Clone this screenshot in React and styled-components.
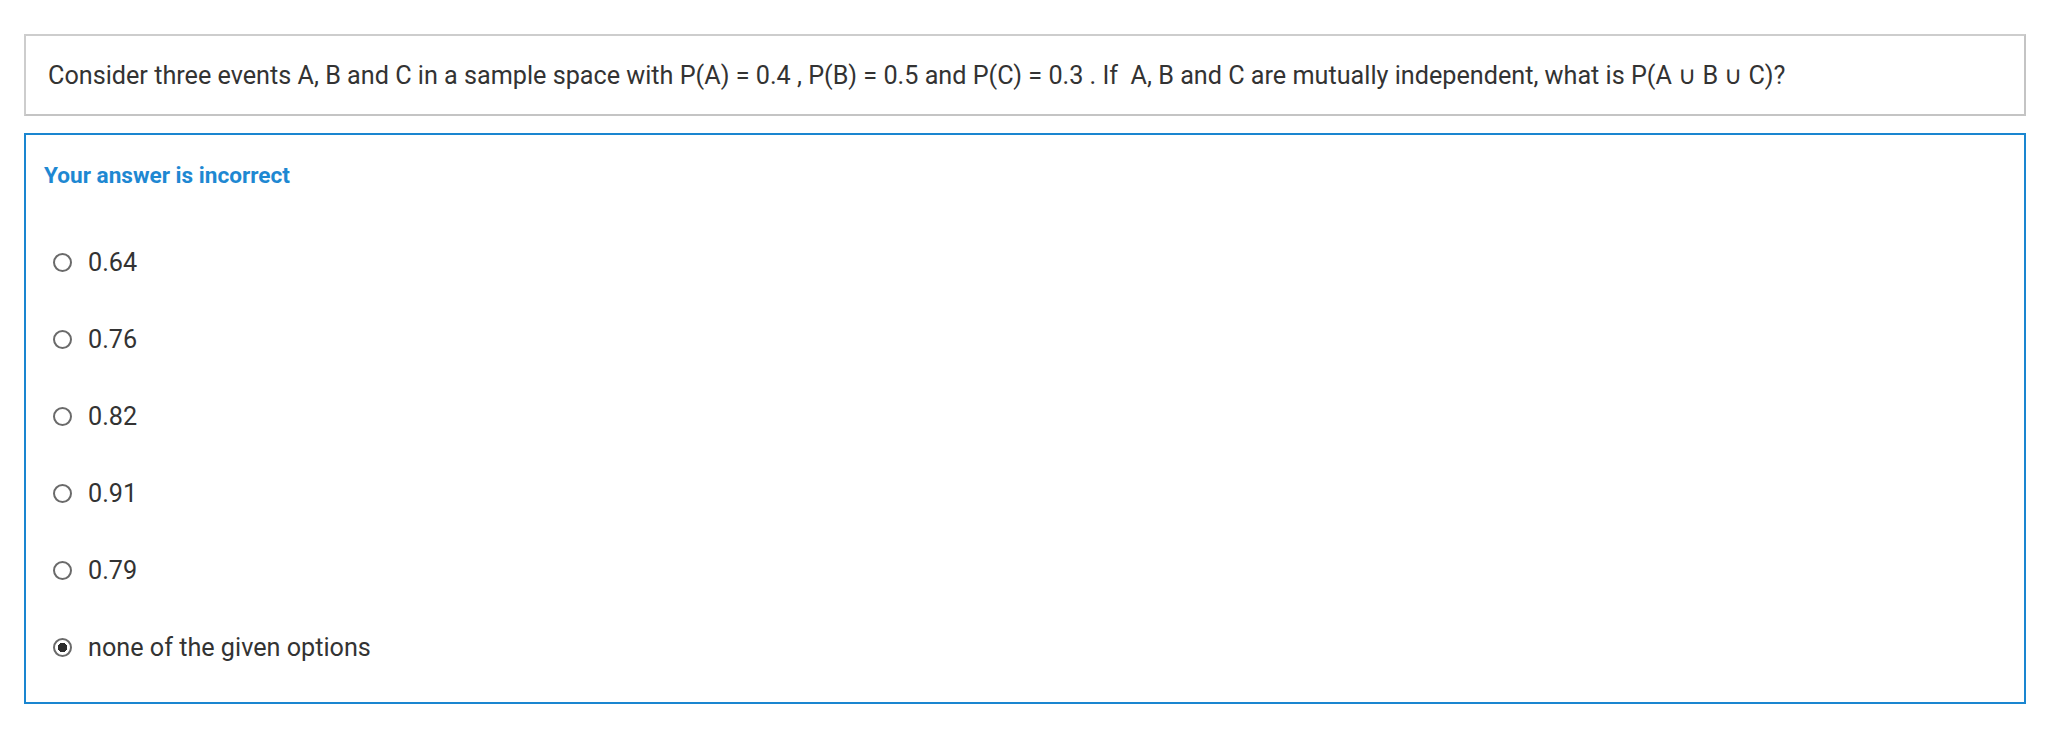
import React from 'react';
import styled, { createGlobalStyle } from 'styled-components';

const GlobalStyle = createGlobalStyle`
  body {
    margin: 0;
    background: #ffffff;
    font-family: Roboto, "Liberation Sans", Arial, sans-serif;
    color: #333333;
  }
`

const options = ['0.64', '0.76', '0.82', '0.91', '0.79', 'none of the given options'];

export default function App() {
  const selected = 5;
  return (
    <Page>
      <GlobalStyle />
      <Question>
        Consider three events A, B and C in a sample space with P(A) = 0.4 , P(B) = 0.5 and P(C) = 0.3 . If&nbsp; A, B and C are mutually independent, what is P(A ∪ B ∪ C)?
      </Question>
      <Answer>
        <Feedback>Your answer is incorrect</Feedback>
        <OptionList>
          {options.map((opt, i) => (
            <Option key={opt}>
              <Radio checked={i === selected} />
              <span>{opt}</span>
            </Option>
          ))}
        </OptionList>
      </Answer>
    </Page>
  );
}

const Page = styled.div`
  padding: 34px 24px 40px;
  display: flex;
  flex-direction: column;
  gap: 17px;
`

const Question = styled.div`
  border: 2px solid #cdcdcd;
  border-right-color: #c4c4c4;
  border-bottom-color: #c4c4c4;
  padding: 0 22px;
  height: 78px;
  display: flex;
  align-items: center;
  font-size: 25.2px;
  color: #333333;
  white-space: nowrap;
`

const Answer = styled.div`
  border: 2px solid #1a86d0;
  padding: 19px 18px 16px;
`

const Feedback = styled.div`
  font-size: 22.6px;
  font-weight: 700;
  line-height: 44px;
  color: #1e88d2;
`

const OptionList = styled.div`
  margin-top: 26px;
  padding-left: 9px;
  display: flex;
  flex-direction: column;
`

const Option = styled.label`
  height: 77px;
  display: flex;
  align-items: center;
  gap: 16px;
  font-size: 25.2px;
  color: #333333;
`

const Radio = styled.span`
  width: 19px;
  height: 19px;
  box-sizing: border-box;
  border-radius: 50%;
  border: 2px solid #6a6a6a;
  background: ${p => (p.checked ? 'radial-gradient(circle, #2b2b2b 0 4.5px, #ffffff 5px)' : '#ffffff')};
  flex-shrink: 0;
`
